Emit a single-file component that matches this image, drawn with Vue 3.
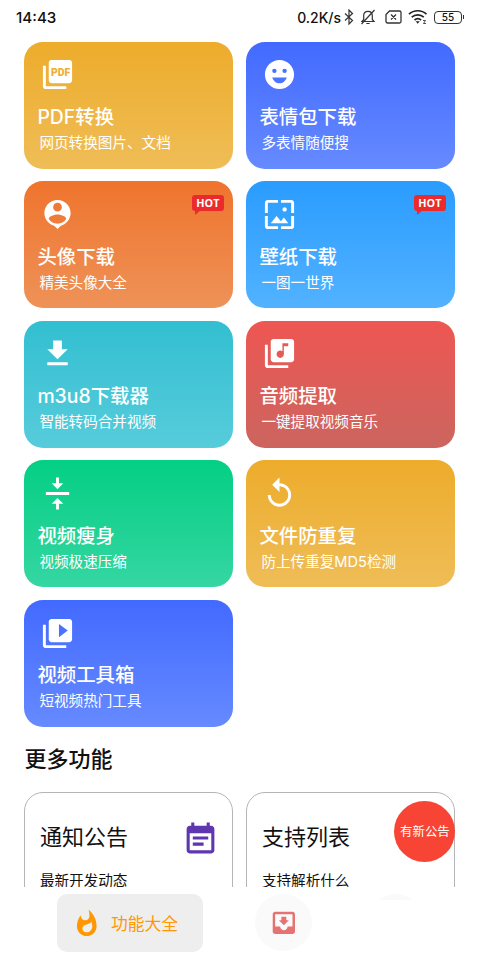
<template>
  <div class="screen">
    <!-- Status bar -->
    <header class="status-bar">
      <span class="clock">14:43</span>
      <div class="status-right">
        <span class="speed">0.2K/s</span>
        <svg class="bluetooth" viewBox="0 0 10 16" fill="none" stroke="#333" stroke-width="1.2">
          <path d="M1 4.5l7.5 7L5 15V1l3.5 3.5L1 11.5" />
        </svg>
        <svg class="bell" viewBox="0 0 16 16" fill="none" stroke="#333" stroke-width="1.2">
          <path d="M2 12.5h12l-1.7-2V6.6C12.3 4 10.5 2.4 8 2.4S3.7 4 3.7 6.6v3.9L2 12.5zM6.3 14.5h3.4M1.5 15L14.5 1" />
        </svg>
        <svg class="sim" viewBox="0 0 17 14" fill="none" stroke="#333" stroke-width="1.3">
          <path d="M4.5 1h10A1.5 1.5 0 0116 2.5v9a1.5 1.5 0 01-1.5 1.5h-12A1.5 1.5 0 011 11.500V4.500zM6 4.500l5 5M11 4.500l-5 5" />
        </svg>
        <svg class="wifi" viewBox="0 0 20 16" fill="none" stroke="#222" stroke-width="1.7">
          <path d="M1 5.200c5-4.600 12.500-4.600 17.500 0M3.700 8.200c3.600-3.200 8.500-3.200 12.100 0M6.500 11c2-1.700 4.600-1.700 6.600 0" />
          <path d="M7.700 12.300h4L9.700 14.700z" fill="#222" stroke="none" />
          <path d="M15 11.500h2.500l-2 3H18" stroke-width=".8" />
        </svg>
        <div class="battery"><span>55</span></div>
      </div>
    </header>

    <main class="content">
      <!-- Coloured tool cards -->
      <div class="grid">
        <div v-for="tool in tools" :key="tool.title" class="tool-card" :class="tool.color">
          <svg class="tool-icon" viewBox="0 0 24 24" fill="currentColor">
            <path :d="tool.icon" fill-rule="evenodd" />
            <text v-if="tool.label" class="icon-label" x="14.100" y="12.800" text-anchor="middle" textLength="13.200" lengthAdjust="spacingAndGlyphs">{{ tool.label }}</text>
          </svg>
          <h3 class="tool-title">{{ tool.title }}</h3>
          <p class="tool-desc">{{ tool.desc }}</p>
          <div v-if="tool.hot" class="hot">HOT</div>
        </div>
      </div>

      <h2 class="section-title">更多功能</h2>

      <div class="grid">
        <div v-for="item in more" :key="item.title" class="info-card">
          <div class="info-head">
            <h3 class="info-title">{{ item.title }}</h3>
            <svg v-if="item.icon" class="info-icon" viewBox="0 0 24 24" fill="currentColor">
              <path :d="item.icon" />
            </svg>
          </div>
          <p class="info-desc">{{ item.desc }}</p>
          <div v-if="item.badge" class="round-badge">{{ item.badge }}</div>
        </div>
      </div>
    </main>

    <!-- Bottom navigation -->
    <nav class="bottom-nav">
      <div class="nav-active">
        <svg viewBox="0 0 24 24" fill="currentColor">
          <path d="M13.5.67s.74 2.65.74 4.8c0 2.06-1.35 3.73-3.41 3.73-2.07 0-3.63-1.67-3.63-3.73l.03-.36C5.21 7.51 4 10.62 4 14c0 4.42 3.58 8 8 8s8-3.58 8-8C20 8.61 17.41 3.8 13.5.67zM11.71 19c-1.78 0-3.22-1.4-3.22-3.14 0-1.62 1.05-2.76 2.81-3.12 1.77-.36 3.6-1.21 4.62-2.58.39 1.29.59 2.65.59 4.04 0 2.65-2.15 4.8-4.8 4.8z" />
        </svg>
        <span>功能大全</span>
      </div>
      <div class="nav-round">
        <svg viewBox="0 0 24 24" fill="currentColor">
          <path d="M19 3H4.990c-1.110 0-1.980.9-1.980 2L3 19c0 1.100.88 2 1.990 2H19c1.100 0 2-.9 2-2V5c0-1.100-.9-2-2-2zm0 12h-4c0 1.660-1.350 3-3 3s-3-1.340-3-3H4.990V5H19v10zm-3-5h-2V7h-4v3H8l4 4 4-4z" />
        </svg>
      </div>
      <div class="nav-hidden"></div>
    </nav>
  </div>
</template>

<script setup>
const tools = [
  {
    title: 'PDF转换',
    desc: '网页转换图片、文档',
    color: 'yellow',
    label: 'PDF',
    icon: 'M20 2H8c-1.100 0-2 .9-2 2v12c0 1.100.9 2 2 2h12c1.100 0 2-.9 2-2V4c0-1.100-.9-2-2-2zM4 6H2v14c0 1.100.9 2 2 2h14v-2H4V6z'
  },
  {
    title: '表情包下载',
    desc: '多表情随便搜',
    color: 'blue',
    icon: 'M12 2C6.480 2 2 6.480 2 12s4.480 10 10 10 10-4.480 10-10S17.520 2 12 2zM8.500 8a1.500 1.500 0 110 3 1.500 1.500 0 010-3zM12 18c-2.280 0-4.220-1.660-5-4h10c-.78 2.340-2.720 4-5 4zM15.500 11a1.500 1.500 0 110-3 1.500 1.500 0 010 3z'
  },
  {
    title: '头像下载',
    desc: '精美头像大全',
    color: 'orange',
    hot: true,
    icon: 'M12 2c-4.970 0-9 4.030-9 9 0 4.170 2.840 7.670 6.690 8.690L12 22l2.310-2.310C18.160 18.670 21 15.170 21 11c0-4.970-4.030-9-9-9zm0 2c1.660 0 3 1.340 3 3s-1.340 3-3 3-3-1.340-3-3 1.340-3 3-3zm0 14.300c-2.500 0-4.710-1.280-6-3.220.03-1.990 4-3.080 6-3.080 1.990 0 5.970 1.090 6 3.080-1.290 1.940-3.500 3.220-6 3.220z'
  },
  {
    title: '壁纸下载',
    desc: '一图一世界',
    color: 'sky',
    hot: true,
    icon: 'M4 4h7V2H4c-1.100 0-2 .9-2 2v7h2V4zm6 9l-4 5h12l-3-4-2.030 2.710L10 13zm7-4.500c0-.83-.67-1.500-1.500-1.500S14 7.670 14 8.500s.67 1.500 1.500 1.500S17 9.330 17 8.500zM20 2h-7v2h7v7h2V4c0-1.100-.9-2-2-2zm0 18h-7v2h7c1.100 0 2-.9 2-2v-7h-2v7zM4 13H2v7c0 1.100.9 2 2 2h7v-2H4v-7z'
  },
  {
    title: 'm3u8下载器',
    desc: '智能转码合并视频',
    color: 'cyan',
    icon: 'M19 9h-4V3H9v6H5l7 7 7-7zM5 18v2h14v-2H5z'
  },
  {
    title: '音频提取',
    desc: '一键提取视频音乐',
    color: 'red',
    icon: 'M20 2H8c-1.100 0-2 .9-2 2v12c0 1.100.9 2 2 2h12c1.100 0 2-.9 2-2V4c0-1.100-.9-2-2-2zm-2 5h-3v5.500c0 1.380-1.120 2.500-2.500 2.500S10 13.880 10 12.500s1.120-2.500 2.500-2.500c.57 0 1.080.19 1.500.51V5h4v2zM4 6H2v14c0 1.100.9 2 2 2h14v-2H4V6z'
  },
  {
    title: '视频瘦身',
    desc: '视频极速压缩',
    color: 'green',
    icon: 'M8 19h3v4h2v-4h3l-4-4-4 4zm8-14h-3V1h-2v4H8l4 4 4-4zM4 11v2h16v-2H4z'
  },
  {
    title: '文件防重复',
    desc: '防上传重复MD5检测',
    color: 'yellow',
    icon: 'M12 5V1L7 6l5 5V7c3.310 0 6 2.690 6 6s-2.690 6-6 6-6-2.690-6-6H4c0 4.420 3.580 8 8 8s8-3.580 8-8-3.580-8-8-8z'
  },
  {
    title: '视频工具箱',
    desc: '短视频热门工具',
    color: 'blue',
    icon: 'M4 6H2v14c0 1.100.9 2 2 2h14v-2H4V6zm16-4H8c-1.100 0-2 .9-2 2v12c0 1.100.9 2 2 2h12c1.100 0 2-.9 2-2V4c0-1.100-.9-2-2-2zm-7 12.500v-9l6 4.500-6 4.500z'
  }
]

const more = [
  {
    title: '通知公告',
    desc: '最新开发动态',
    icon: 'M17 10H7v2h10v-2zm2-7h-1V1h-2v2H8V1H6v2H5c-1.110 0-1.990.9-1.990 2L3 19c0 1.100.89 2 2 2h14c1.100 0 2-.9 2-2V5c0-1.100-.9-2-2-2zm0 16H5V8h14v11zm-5-5H7v2h7v-2z'
  },
  { title: '支持列表', desc: '支持解析什么', badge: '有新公告' }
]
</script>

<style>
body {
  margin: 0;
  background: #fff;
}
</style>

<style scoped>
.screen {
  width: 480px;
  height: 960px;
  display: flex;
  flex-direction: column;
  overflow: hidden;
  background: #fff;
  color: #111;
  font-family: Inter, "Noto Sans CJK SC", sans-serif;
}

h2,
h3,
p {
  margin: 0;
  font-weight: 400;
  white-space: nowrap;
}

svg {
  display: block;
  flex-shrink: 0;
}

.status-bar {
  height: 34px;
  flex-shrink: 0;
  display: flex;
  justify-content: space-between;
  padding: 0 16px;
  box-sizing: border-box;
  align-items: center;
}

.clock {
  font-size: 15.2px;
  font-weight: 500;
}

.status-right {
  display: flex;
  align-items: center;
}

.speed {
  font-size: 14px;
  font-weight: 500;
  margin-right: 3px;
}

.bluetooth {
  width: 10px;
  height: 16px;
  margin-right: 6px;
}

.bell {
  width: 16px;
  height: 16px;
  margin-right: 9px;
}

.sim {
  width: 17px;
  height: 14px;
  margin-right: 6px;
}

.wifi {
  width: 20px;
  height: 16px;
  margin-right: 6px;
}

.battery {
  position: relative;
  width: 28px;
  height: 13px;
  box-sizing: border-box;
  border: 1.5px solid #333;
  border-radius: 4px;
  display: flex;
  align-items: center;
  justify-content: center;
  font-size: 10px;
  font-weight: 500;
  margin-right: 2px;
}

.battery::after {
  content: '';
  position: absolute;
  right: -3px;
  top: 3px;
  width: 1.5px;
  height: 4px;
  background: #333;
}

.content {
  height: 853px;
  flex-shrink: 0;
  overflow: hidden;
  padding: 7.7px 24.4px 0;
  box-sizing: border-box;
}

.grid {
  display: grid;
  grid-template-columns: 209px 209px;
  column-gap: 13px;
  row-gap: 12.6px;
}

.tool-card {
  position: relative;
  height: 127px;
  box-sizing: border-box;
  padding: 15.5px 13px 0;
  border-radius: 19px;
  color: #fff;
}

.yellow {
  background: linear-gradient(#edac2b, #efbd57);
  --tone: #edb036;
}

.blue {
  background: linear-gradient(#426aff, #668aff);
}

.orange {
  background: linear-gradient(#ef742d, #ee9258);
}

.sky {
  background: linear-gradient(#2a9cff, #52b2ff);
}

.cyan {
  background: linear-gradient(#32bfd1, #57ccdb);
}

.red {
  background: linear-gradient(#ee5652, #cc655f);
}

.green {
  background: linear-gradient(#04cf84, #35d6a2);
}

.tool-icon {
  width: 35px;
  height: 35px;
  margin-left: 2.5px;
}

.icon-label {
  font-family: Roboto, sans-serif;
  font-size: 7.8px;
  font-weight: 900;
  fill: var(--tone);
}

.tool-title {
  margin-top: 10.8px;
  font-size: 19.4px;
  line-height: 28px;
  font-weight: 500;
}

.tool-desc {
  margin: 2px 0 0 2px;
  font-size: 14.6px;
  line-height: 20px;
}

.hot {
  position: absolute;
  top: 14px;
  right: 9.5px;
  width: 32px;
  height: 16px;
  border-radius: 3px;
  background: #eb2b2b;
  font-family: "Open Sans", sans-serif;
  font-size: 10.8px;
  line-height: 16px;
  font-weight: 700;
  text-align: center;
}

.hot::after {
  content: '';
  position: absolute;
  left: 3px;
  top: 15px;
  border-top: 5px solid #eb2b2b;
  border-right: 6px solid transparent;
}

.section-title {
  font-size: 22px;
  line-height: 64.6px;
  font-weight: 500;
}

.info-card {
  position: relative;
  height: 127px;
  box-sizing: border-box;
  border: 1px solid #b5b5b5;
  border-radius: 19px;
  padding: 25px 13.5px 0 14.5px;
}

.info-head {
  display: flex;
  justify-content: space-between;
  align-items: center;
  height: 38px;
}

.info-title {
  font-size: 22px;
  line-height: 32px;
}

.info-icon {
  width: 37px;
  height: 37px;
  margin-top: 5px;
  color: #5f35b0;
}

.info-desc {
  margin-top: 15.3px;
  font-size: 14.6px;
  line-height: 20px;
}

.round-badge {
  position: absolute;
  top: 8px;
  right: -1px;
  width: 61px;
  height: 61px;
  border-radius: 50%;
  background: #f74435;
  color: #fff;
  font-size: 12.4px;
  line-height: 61px;
  text-align: center;
  white-space: nowrap;
}

.bottom-nav {
  flex: 1;
  display: flex;
  align-items: flex-start;
  padding: 7.4px 0 0 57px;
}

.nav-active {
  width: 146px;
  height: 58px;
  box-sizing: border-box;
  padding-left: 14.5px;
  border-radius: 10px;
  background: #eee;
  color: #ff9800;
  display: flex;
  align-items: center;
  gap: 10px;
  font-size: 16.8px;
}

.nav-active svg {
  width: 29.5px;
  height: 29.5px;
}

.nav-round {
  width: 57px;
  height: 57px;
  margin-left: 52px;
  border-radius: 50%;
  background: #fafafa;
  color: #e57373;
  display: flex;
  align-items: center;
  justify-content: center;
}

.nav-round svg {
  width: 29.7px;
  height: 29.7px;
}

/* only the top edge of the third button is on show */
.nav-hidden {
  width: 57px;
  height: 6px;
  margin-left: 55px;
  background: radial-gradient(circle at 50% 28.5px, #fafafa 28px, transparent 28.5px);
}
</style>
